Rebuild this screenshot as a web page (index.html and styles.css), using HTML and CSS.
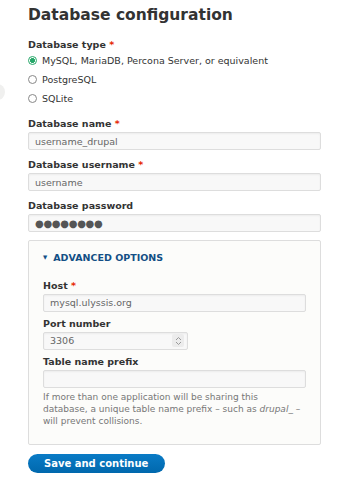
FILE: index.html
```html
<!DOCTYPE html>
<html lang="en">
<head>
<meta charset="UTF-8" />
<title>Database configuration</title>
<link rel="stylesheet" href="styles.css">
</head>
<body>
<div class="edge-blob"></div>
<main class="page">
  <h1>Database configuration</h1>

  <form class="db-form">
    <!-- database type -->
    <div class="form-item">
      <div class="label">Database type <span class="req">*</span></div>
      <div class="radios">
        <label class="radio"><span class="dot checked"></span>MySQL, MariaDB, Percona Server, or equivalent</label>
        <label class="radio"><span class="dot"></span>PostgreSQL</label>
        <label class="radio"><span class="dot"></span>SQLite</label>
      </div>
    </div>

    <div class="form-item">
      <label class="label" for="db-name">Database name <span class="req">*</span></label>
      <input id="db-name" class="text" type="text" value="username_drupal">
    </div>

    <div class="form-item">
      <label class="label" for="db-user">Database username <span class="req">*</span></label>
      <input id="db-user" class="text" type="text" value="username">
    </div>

    <div class="form-item">
      <label class="label" for="db-pass">Database password</label>
      <div class="text pass">&#9679;&#9679;&#9679;&#9679;&#9679;&#9679;&#9679;&#9679;</div>
    </div>

    <!-- advanced -->
    <fieldset class="advanced">
      <div class="summary"><span class="tri">&#9660;</span>ADVANCED OPTIONS</div>

      <div class="form-item">
        <label class="label" for="host">Host <span class="req">*</span></label>
        <input id="host" class="text" type="text" value="mysql.ulyssis.org">
      </div>

      <div class="form-item">
        <label class="label" for="port">Port number</label>
        <div class="text port">
          <span>3306</span>
          <span class="spin">
            <svg width="7" height="10" viewBox="0 0 7 10"><path d="M1 4 3.5 1.5 6 4M1 6 3.5 8.5 6 6" fill="none" stroke="#9a9a9a" stroke-width="1"/></svg>
          </span>
        </div>
      </div>

      <div class="form-item last">
        <label class="label" for="prefix">Table name prefix</label>
        <input id="prefix" class="text" type="text" value="">
        <div class="desc">If more than one application will be sharing this database, a unique table name prefix – such as <em>drupal_</em> – will prevent collisions.</div>
      </div>
    </fieldset>

    <div class="actions">
      <button type="button" class="btn">Save and continue</button>
    </div>
  </form>
</main>
</body>
</html>
```
FILE: styles.css
```css
body{margin:0;background:#fff;font-family:"DejaVu Sans",sans-serif;color:#333;font-size:9.5px}
.edge-blob{position:absolute;left:-10px;top:84px;width:15px;height:16px;border-radius:50%;background:#f0f0ef}
.page{padding:5px 21px 0 28px}
h1{margin:0 0 13px;font-size:15.5px;font-weight:bold;color:#333;line-height:20px}
.form-item{margin-bottom:8px}
.label{display:block;font-weight:bold;font-size:9.5px;line-height:13px;margin-bottom:2px;color:#333}
.req{color:#e62600}
.radios{display:flex;flex-direction:column;gap:6px;margin-top:3px;margin-bottom:12px}
.radio{display:flex;align-items:center;font-size:9.5px;line-height:13px;color:#333}
.dot{width:7px;height:7px;border:1px solid #888;border-radius:50%;margin-right:5px;box-sizing:content-box}
.dot.checked{border-color:#26a769;background:radial-gradient(circle,#26a769 0 2.2px,#fff 2.7px)}
.text{display:block;width:100%;box-sizing:border-box;height:18px;padding:0 6px;border:1px solid #ddd;border-radius:2px;
      background:#f8f8f8;font-family:inherit;font-size:9.5px;color:#666;box-shadow:inset 0 1px 2px rgba(0,0,0,.05)}
.pass{display:flex;align-items:center;color:#555;font-size:10px;letter-spacing:-.3px}
.advanced{margin:2px 0 0;padding:10px 14px 17px;border:1px solid #ddd;border-radius:2px;background:#fcfcfa}
.advanced .form-item{margin-bottom:5.5px}
.advanced .form-item.last{margin-bottom:0}
.advanced .label{margin-bottom:1.5px}
.summary{font-weight:bold;font-size:9.5px;color:#134f85;line-height:13px;margin-bottom:15px}
.tri{font-size:5.5px;margin-right:6px;vertical-align:2px}
.port{display:flex;align-items:center;justify-content:space-between;width:145px;padding-right:3px}
.spin{display:flex;align-items:center;justify-content:center;width:12px;height:13px;background:#ececec;border-radius:2px}
.desc{margin-top:3px;padding-right:3px;font-size:9px;line-height:12px;color:#777}
.desc em{font-style:italic}
.actions{margin-top:9px}
.btn{height:19px;padding:0 17px 0 16px;border:none;border-radius:10px;background:linear-gradient(#0a7bc6,#0068ad);
     color:#fff;font-family:inherit;font-weight:bold;font-size:10px;cursor:pointer}
```
